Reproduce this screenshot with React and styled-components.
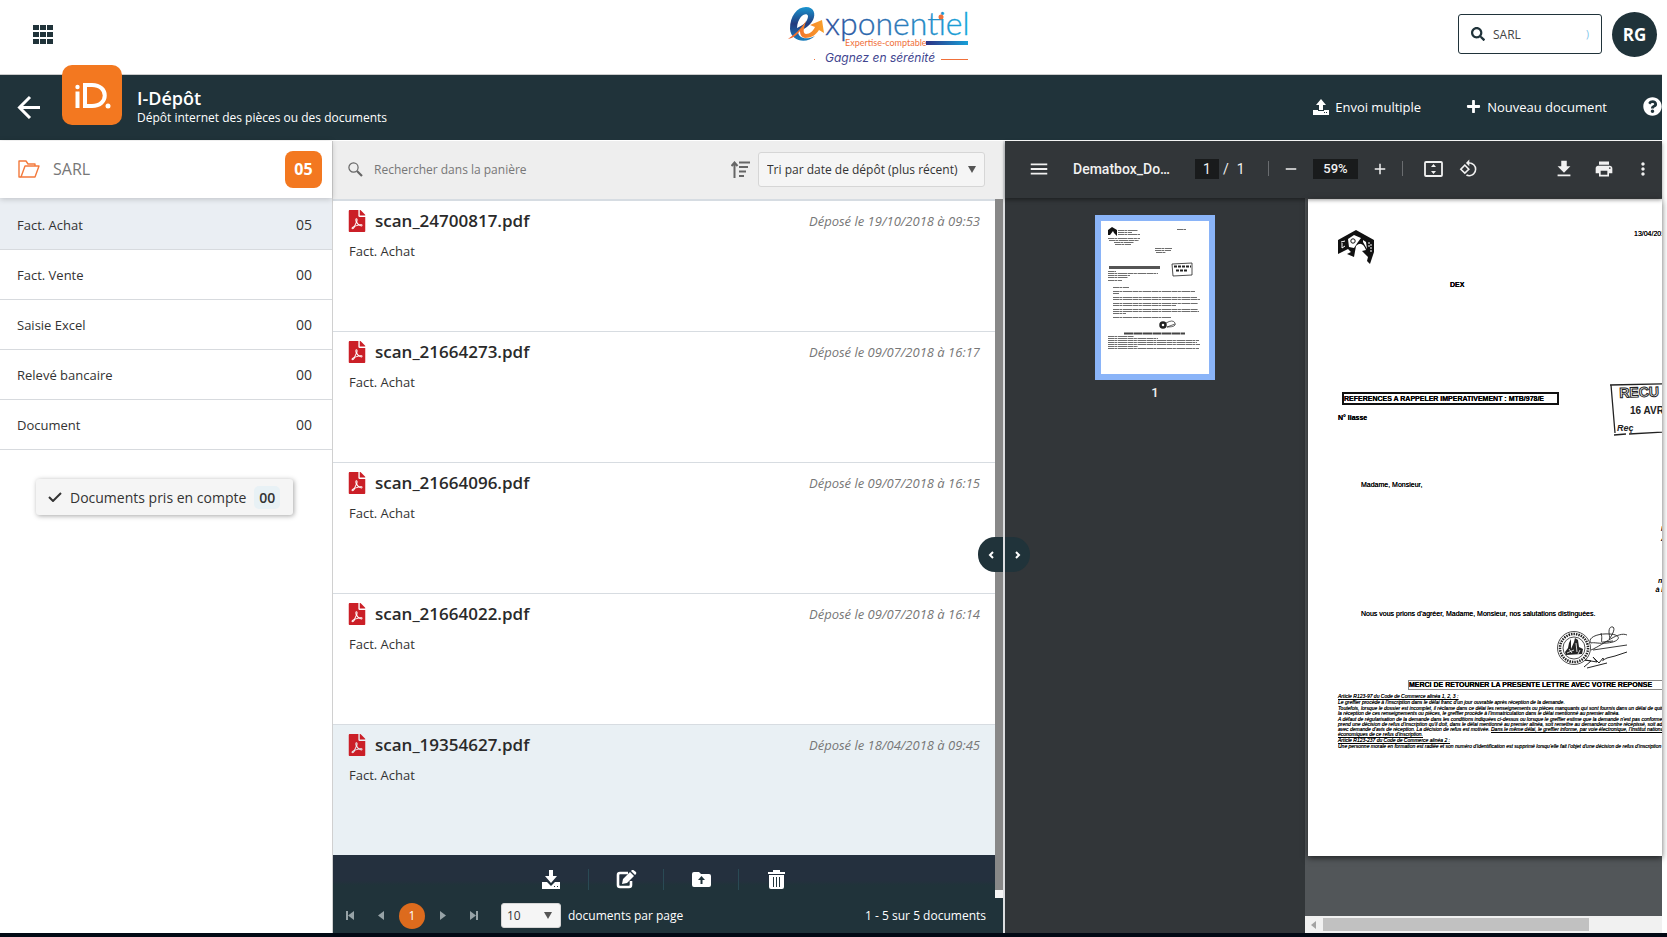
import styled, { createGlobalStyle } from 'styled-components';
import { FaFilePdf, FaPlus, FaQuestionCircle, FaSearch } from 'react-icons/fa';
import {
  MdAdd,
  MdMenu,
  MdMoreVert,
  MdPrint,
  MdRemove,
  MdRotate90DegreesCcw,
} from 'react-icons/md';

const folders = [
  { name: 'Fact. Achat', count: '05', active: true },
  { name: 'Fact. Vente', count: '00' },
  { name: 'Saisie Excel', count: '00' },
  { name: 'Relevé bancaire', count: '00' },
  { name: 'Document', count: '00' },
];

const documents = [
  { name: 'scan_24700817.pdf', date: '19/10/2018 à 09:53' },
  { name: 'scan_21664273.pdf', date: '09/07/2018 à 16:17' },
  { name: 'scan_21664096.pdf', date: '09/07/2018 à 16:15' },
  { name: 'scan_21664022.pdf', date: '09/07/2018 à 16:14' },
  { name: 'scan_19354627.pdf', date: '18/04/2018 à 09:45', selected: true },
];

// [y, x, width] of each text line in the page preview
const thumbLines = [
  [9, 17, 20], [11, 17, 14], [13, 17, 22],
  [17, 7, 32], [19, 8, 30], [21, 13, 20], [23, 14, 16],
  [8, 76, 9], [27, 54, 17], [29, 54, 16], [31, 55, 10],
  [50, 7, 8], [52, 7, 50], [54, 7, 22], [56, 7, 20], [59, 7, 14],
  [66, 12, 16], [70, 12, 82], [72, 12, 6], [76, 12, 84], [78, 12, 87],
  [82, 12, 85], [84, 12, 63], [88, 12, 85], [90, 12, 86], [92, 12, 13],
  [96, 12, 58], [115, 7, 26], [117, 7, 50], [119, 7, 91], [121, 7, 89],
  [123, 7, 92], [125, 7, 30], [127, 7, 91],
];

const GlobalStyle = createGlobalStyle`
  * {
    box-sizing: border-box;
  }

  body {
    margin: 0;
    background: #fff;
    font-family: 'Open Sans', 'Noto Sans', sans-serif;
    font-size: 13px;
    color: #333;
  }

  button, input, select {
    margin: 0;
    padding: 0;
    border: 0;
    background: none;
    font: inherit;
    color: inherit;
  }

  button {
    cursor: pointer;
  }

  h1, h2, p, ul {
    margin: 0;
    padding: 0;
    font-weight: normal;
  }

  svg {
    display: block;
    flex-shrink: 0;
  }
`;

const GridIcon = () => (
  <svg width="20" height="19" viewBox="0 0 20 19" fill="#20333a">
    {[0, 7, 14].map((y) =>
      [0, 7, 14].map((x) => (
        <rect key={`${x}-${y}`} x={x} y={y} width="6" height="5" />
      ))
    )}
  </svg>
);

const BrandLogo = () => (
  <svg width="180" height="60" viewBox="0 0 180 60" overflow="visible" role="img" aria-label="Exponentiel">
    <defs>
      <linearGradient id="word" x1="0" x2="1">
        <stop offset="0" stopColor="#2b4f9c" />
        <stop offset="0.5" stopColor="#2c79b8" />
        <stop offset="1" stopColor="#18a5dc" />
      </linearGradient>
      <linearGradient id="bar" x1="0" x2="1">
        <stop offset="0" stopColor="#2d3284" />
        <stop offset="1" stopColor="#17a0d8" />
      </linearGradient>
      <linearGradient id="swirl" x1="0" x2="0" y1="0" y2="1">
        <stop offset="0" stopColor="#1a95d0" />
        <stop offset="0.5" stopColor="#223a7e" />
        <stop offset="1" stopColor="#1b7fbd" />
      </linearGradient>
      <linearGradient id="arrow" x1="0" x2="1">
        <stop offset="0" stopColor="#f0622c" />
        <stop offset="1" stopColor="#f9a02b" />
      </linearGradient>
    </defs>
    <path
      d="M2 25C2 12 9 3 18 3C26 3 28 10 25 16C21 23 15 26 10 27C10 35 19 36 27 32C19 40 3 38 2 25ZM9 24C16 21 20 17 20 12C19 8 10 11 9 24Z"
      fill="url(#swirl)"
      fillRule="evenodd"
    />
    <path
      d="M0 35C7 30 13 25 18 17C16 24 14 29 18 30C22 30 25 27 27 23L22 21L34 16L36 29L31 26C28 31 23 34 17 34C13 33 12 30 12 27C9 31 5 34 0 35Z"
      fill="url(#arrow)"
    />
    <text x="37" y="31" fontFamily="Lato, sans-serif" fontSize="32" fontWeight="300" stroke="url(#word)" strokeWidth="0.300" fill="url(#word)">
      xponentiel
    </text>
    <circle cx="153" cy="13" r="2.500" fill="#f0703a" />
    <text x="57" y="42" fontFamily="Lato, sans-serif" fontSize="9" fill="#f0703a">
      Expertise-comptable
    </text>
    <rect x="138" y="37" width="42" height="4" fill="url(#bar)" />
    <rect x="26" y="55" width="1" height="1" fill="#f0703a" />
    <text x="37" y="58" fontFamily="Inter, sans-serif" fontStyle="italic" fontSize="12" fill="#41458f">
      Gagnez en sérénité
    </text>
    <rect x="153" y="55" width="27" height="1" fill="#f0703a" />
  </svg>
);

const BackIcon = () => (
  <svg width="24" height="24" viewBox="0 0 24 24" fill="none" stroke="#fff" strokeWidth="3">
    <path d="M13 2L2.500 12.500L13 23M2.500 12.500H23" />
  </svg>
);

const UploadIcon = () => (
  <svg width="16" height="16" viewBox="0 0 16 16" fill="#fff">
    <path d="M8 0L13 6H10V11H6V6H3Z" />
    <path d="M0 11H5V12H11V11H16V16H0ZM11 13V14H12V13ZM13 13V14H14V13Z" fillRule="evenodd" />
  </svg>
);

const FolderOpenIcon = () => (
  <svg width="22" height="18" viewBox="0 0 22 18" fill="none" stroke="#f37a3c" strokeWidth="1.4" strokeLinejoin="round">
    <path d="M3 17H1V1H8L10 4H17V6" />
    <path d="M3 17L7 6H21L17 17Z" />
  </svg>
);

const CheckIcon = () => (
  <svg width="14" height="10" viewBox="0 0 14 10" fill="none" stroke="#333" strokeWidth="2">
    <path d="M1 5L5 9L13 1" />
  </svg>
);

const MagnifierIcon = () => (
  <svg width="15" height="15" viewBox="0 0 15 15" fill="none" stroke="#666">
    <circle cx="5.500" cy="5.500" r="4.600" strokeWidth="1.200" />
    <path d="M9 9L14 14" strokeWidth="2.200" />
  </svg>
);

const SortIcon = () => (
  <svg width="19" height="17" viewBox="0 0 19 17" fill="none" stroke="#666" strokeWidth="2">
    <path d="M3.500 17V2M0.500 5L3.500 1.500L6.500 5" />
    <path d="M8 1.500H19M8 6H17M8 10.500H15M8 15H13" />
  </svg>
);

const DownloadTrayIcon = () => (
  <svg width="18" height="19" viewBox="0 0 18 19" fill="#fff">
    <path d="M7 0H11V6H15L9 13L3 6H7Z" />
    <path d="M0 12H5L9 16L13 12H18V19H0ZM12 16V17H13V16ZM15 16V17H16V16Z" fillRule="evenodd" />
  </svg>
);

const EditIcon = () => (
  <svg width="21" height="19" viewBox="0 0 21 19">
    <path d="M12 3H4Q2 3 2 5V15Q2 17 4 17H13Q15 17 15 15V11" fill="none" stroke="#fff" strokeWidth="2.600" />
    <path d="M6 14L7 9L14 2L18 6L11 13ZM15 1L16 0Q17 -0.500 18 0.500L20 2Q20.500 3 20 4L19 5Z" fill="#fff" />
  </svg>
);

const FolderUpIcon = () => (
  <svg width="19" height="15" viewBox="0 0 19 15">
    <path d="M0 2Q0 0 2 0H7L9 2H17Q19 2 19 4V13Q19 15 17 15H2Q0 15 0 13Z" fill="#fff" />
    <path d="M9.500 4L13 8H10.500V12H8.500V8H6Z" fill="#20333a" />
  </svg>
);

const TrashIcon = () => (
  <svg width="17" height="19" viewBox="0 0 17 19">
    <path d="M5 2V0H12V2H17V4H0V2ZM1 5H16V17Q16 19 14 19H3Q1 19 1 17Z" fill="#fff" />
    <path d="M5.500 7V17M8.500 7V17M11.500 7V17" stroke="#20333a" />
  </svg>
);

const PagerIcon = ({ bar, flip }) => (
  <svg width="9" height="9" viewBox="0 0 9 9" fill="#97a3a7" transform={flip ? 'rotate(180)' : undefined}>
    <path d="M8 0V9L2 4.500Z" />
    {bar && <rect width="2" height="9" />}
  </svg>
);

const CaretDown = () => (
  <svg width="8" height="7" viewBox="0 0 8 7" fill="#555">
    <path d="M0 0H8L4 7Z" />
  </svg>
);

const FitPageIcon = () => (
  <svg width="19" height="16" viewBox="0 0 19 16" fill="none" stroke="#f1f1f1">
    <rect x="1" y="1" width="17" height="14" rx="1" strokeWidth="1.800" />
    <path d="M9.500 3L12 6H7ZM9.500 13L12 10H7Z" fill="#f1f1f1" stroke="none" />
  </svg>
);

const DownloadIcon = () => (
  <svg width="22" height="22" viewBox="0 0 24 24" fill="#f1f1f1">
    <path d="M19 9h-4V3H9v6H5l7 7 7-7zM5 18v2h14v-2H5z" />
  </svg>
);

const ChevronIcon = ({ right }) => (
  <svg width="6" height="8" viewBox="0 0 6 8" fill="none" stroke="#fff" strokeWidth="2">
    <path d={right ? 'M1 1L4 4L1 7' : 'M5 1L2 4L5 7'} />
  </svg>
);

const ThumbDrawing = () => (
  <svg width="108" height="153" viewBox="0 0 108 153">
    <path d="M7 14V9L11 6L16 9V15L13 12L12 10L9 14Z" fill="#111" />
    <g stroke="#222" strokeDasharray="6 0.400 3 0.600 9 0.500" opacity="0.650">
      {thumbLines.map(([y, x, w]) => (
        <path key={`${y}-${x}`} d={`M${x} ${y + 0.5}h${w}`} />
      ))}
    </g>
    <rect x="8" y="45" width="51" height="3" fill="#555" />
    <g fill="none" stroke="#222">
      <path d="M71 43L91 42V54L72 55Z" strokeWidth="0.800" />
      <path d="M73 45.500h17M75 49.500h12" strokeWidth="2" strokeDasharray="3 1" />
      <circle cx="62" cy="104" r="2.500" strokeWidth="2.500" />
      <path d="M65 102Q72 98 74 102T66 106L74 103" strokeWidth="0.700" />
    </g>
    <path d="M23 112.500h61" stroke="#444" strokeWidth="2" strokeDasharray="9 0.500" />
  </svg>
);

const LetterEmblem = () => (
  <svg width="37" height="34" viewBox="0 0 37 34">
    <path d="M0 10L18 0L36 10V22L32 34L29 31L30 27L24 21L28 20Q24 10 18 16L16 27L9 24L13 22L10 19L6 21L0 24Z" fill="#111" />
    <path d="M10 9L16 5L23 8L20 12L16 18L11 17ZM25 10L28 12L29 19L25 12Z" fill="#fff" />
    <path d="M3 12L7 11M4 13V18L7 16" stroke="#fff" fill="none" />
    <circle cx="15" cy="11" r="2.200" fill="none" stroke="#111" />
    <path d="M31 12V18M33 14V23" stroke="#fff" strokeDasharray="2 1" />
  </svg>
);

const Stamp = () => (
  <svg width="90" height="54" viewBox="0 0 90 54">
    <path d="M0 2L88 0M1 2L5 50M4 52L16 51M19 51L88 47" stroke="#222" fill="none" strokeWidth="1.300" />
    <g fontFamily="'Liberation Sans', sans-serif" fontWeight="bold" fill="#222">
      <text x="9" y="15" fontSize="14" fill="#fff" stroke="#222" transform="rotate(-2)">RECU LE</text>
      <text x="20" y="31" fontSize="10">16 AVR. 2018</text>
      <text x="7" y="48" fontSize="9" fontStyle="italic">Reç</text>
    </g>
  </svg>
);

const SealAndSignature = () => (
  <svg width="72" height="44" viewBox="0 0 72 44" fill="none" stroke="#222">
    <circle cx="17" cy="23" r="16.500" strokeWidth="0.800" />
    <circle cx="17" cy="23" r="14" strokeWidth="2.500" strokeDasharray="1.500 1" />
    <circle cx="17" cy="23" r="11" strokeWidth="0.800" />
    <path d="M8 27L11 23L12 18L14 14V24L17 17L18 13L21 15L22 22L26 24L25 29L9 30Z" fill="#222" stroke="none" />
    <path d="M12 24L15 28M19 18L20 27M23 25L21 29M10 28L17 25" stroke="#fff" strokeWidth="0.800" />
    <path d="M34 18C30 13 40 8 53 9C66 10 63 17 50 18C42 19 37 17 34 18ZM44 8C46 14 43 18 46 17L56 16M53 13C51 6 52 1 56 2C59 4 54 12 52 14M34 25C48 19 61 6 70 10M36 25L70 20" strokeWidth="0.900" />
    <path d="M27 42L34 36L28 35L40 37L36 32L42 38L46 33C48 36 42 37 50 33L54 32L58 31L70 27M30 43L50 38" strokeWidth="1" />
  </svg>
);

const App = () => (
  <Page>
    <GlobalStyle />
    <TopBar>
      <IconButton aria-label="Applications">
        <GridIcon />
      </IconButton>
      <BrandLogo />
      <TopRight>
        <CompanySearch>
          <FaSearch size={14} color="#20333a" />
          <input aria-label="Société" defaultValue="SARL" />
          <span aria-hidden="true">)</span>
        </CompanySearch>
        <Avatar aria-label="Mon compte">RG</Avatar>
      </TopRight>
    </TopBar>

    <AppHeader>
      <IconButton aria-label="Retour">
        <BackIcon />
      </IconButton>
      <AppBadge aria-hidden="true">
        <svg width="60" height="60" viewBox="0 0 60 60" fill="none" stroke="#fff">
          <circle cx="15.500" cy="22" r="2.200" fill="#fff" stroke="none" />
          <path d="M15.500 26.500V43" strokeWidth="4" />
          <path d="M23 20H30C47 20 47 41 30 41H23Z" strokeWidth="4" />
          <circle cx="46" cy="41" r="2.500" fill="#fff" stroke="none" />
        </svg>
      </AppBadge>
      <AppTitle>
        <h1>I-Dépôt</h1>
        <p>Dépôt internet des pièces ou des documents</p>
      </AppTitle>
      <HeaderActions>
        <HeaderButton>
          <UploadIcon />
          Envoi multiple
        </HeaderButton>
        <HeaderButton>
          <FaPlus size={15} />
          Nouveau document
        </HeaderButton>
        <IconButton aria-label="Aide">
          <FaQuestionCircle size={19} color="#fff" />
        </IconButton>
      </HeaderActions>
    </AppHeader>

    <Workspace>
      <Sidebar>
        <SidebarHead>
          <FolderOpenIcon />
          <h2>SARL</h2>
          <TotalBadge>05</TotalBadge>
        </SidebarHead>
        <FolderList>
          {folders.map(({ name, count, active }) => (
            <FolderItem key={name} $active={active}>
              <a href="#folder">
                {name}
                <span>{count}</span>
              </a>
            </FolderItem>
          ))}
        </FolderList>
        <ProcessedButton>
          <CheckIcon />
          Documents pris en compte
          <b>00</b>
        </ProcessedButton>
      </Sidebar>

      <Listing>
        <ListHead>
          <MagnifierIcon />
          <input aria-label="Rechercher" placeholder="Rechercher dans la panière" />
          <SortIcon />
          <SelectBox $height={35} $width={227}>
            <select aria-label="Trier">
              <option>Tri par date de dépôt (plus récent)</option>
            </select>
            <CaretDown />
          </SelectBox>
        </ListHead>
        <ListBody>
          <ListColumn>
            <DocumentList>
              {documents.map(({ name, date, selected }) => (
                <DocumentRow key={name} $selected={selected}>
                  <FaFilePdf size={22} color="#cb1f27" />
                  <h2>{name}</h2>
                  <time>Déposé le {date}</time>
                  <p>Fact. Achat</p>
                </DocumentRow>
              ))}
            </DocumentList>
            <ActionBar>
              <button aria-label="Télécharger"><DownloadTrayIcon /></button>
              <button aria-label="Modifier"><EditIcon /></button>
              <button aria-label="Déplacer"><FolderUpIcon /></button>
              <button aria-label="Supprimer"><TrashIcon /></button>
            </ActionBar>
          </ListColumn>
          <ListScrollbar />
        </ListBody>
        <Pager>
          <button aria-label="Première page"><PagerIcon bar /></button>
          <button aria-label="Page précédente"><PagerIcon /></button>
          <CurrentPage>1</CurrentPage>
          <button aria-label="Page suivante"><PagerIcon flip /></button>
          <button aria-label="Dernière page"><PagerIcon bar flip /></button>
          <SelectBox $height={25} $width={60} $tight>
            <select id="page-size">
              <option>10</option>
            </select>
            <CaretDown />
          </SelectBox>
          <label htmlFor="page-size">documents par page</label>
          <PagerInfo>1 - 5 sur 5 documents</PagerInfo>
        </Pager>
        <SplitToggle>
          <button aria-label="Réduire la liste"><ChevronIcon /></button>
          <button aria-label="Agrandir la liste"><ChevronIcon right /></button>
        </SplitToggle>
      </Listing>

      <Viewer>
        <ViewerBar>
          <IconButton aria-label="Menu"><MdMenu size={22} /></IconButton>
          <ViewerTitle>Dematbox_Do…</ViewerTitle>
          <PageNumber>
            <input aria-label="Page" defaultValue="1" />
            <span>/</span>
            <span>1</span>
          </PageNumber>
          <Divider />
          <ZoomGroup>
            <IconButton aria-label="Zoom arrière"><MdRemove size={18} /></IconButton>
            <input aria-label="Zoom" defaultValue="59%" />
            <IconButton aria-label="Zoom avant"><MdAdd size={18} /></IconButton>
          </ZoomGroup>
          <Divider />
          <ViewTools>
            <IconButton aria-label="Ajuster à la page"><FitPageIcon /></IconButton>
            <IconButton aria-label="Pivoter"><MdRotate90DegreesCcw size={19} /></IconButton>
          </ViewTools>
          <FileTools>
            <IconButton aria-label="Télécharger"><DownloadIcon /></IconButton>
            <IconButton aria-label="Imprimer"><MdPrint size={20} /></IconButton>
            <IconButton aria-label="Plus"><MdMoreVert size={20} /></IconButton>
          </FileTools>
        </ViewerBar>
        <ViewerBody>
          <Thumbnails>
            <Thumbnail aria-label="Page 1">
              <ThumbDrawing />
            </Thumbnail>
            <span>1</span>
          </Thumbnails>
          <Canvas>
            <Letter>
              <LetterHead>
                <LetterEmblem />
                <span>13/04/2018</span>
              </LetterHead>
              <LetterCity>DEX</LetterCity>
              <LetterReference>
                <div>
                  <strong>REFERENCES A RAPPELER IMPERATIVEMENT : MTB/978/E</strong>
                  <p>N° liasse</p>
                </div>
                <Stamp />
              </LetterReference>
              <LetterText>Madame, Monsieur,</LetterText>
              <LetterRemains>
                <span>N</span>
                <span>A</span>
                <span>d</span>
                <span>ne</span>
                <span>à E</span>
              </LetterRemains>
              <LetterText>
                Nous vous prions d'agréer, Madame, Monsieur, nos salutations distinguées.
              </LetterText>
              <LetterSeal>
                <SealAndSignature />
              </LetterSeal>
              <LetterNotice>MERCI DE RETOURNER LA PRESENTE LETTRE AVEC VOTRE REPONSE</LetterNotice>
              <FinePrint>
                <p><u>Article R123-97 du Code de Commerce alinéa 1, 2, 3 :</u></p>
                <p>Le greffier procède à l'inscription dans le délai franc d'un jour ouvrable après réception de la demande.</p>
                <p>
                  Toutefois, lorsque le dossier est incomplet, il réclame dans ce délai les renseignements ou pièces manquants qui sont fournis dans un délai de quinze jours à compter de<br />
                  la réception de ces renseignements ou pièces, le greffier procède à l'immatriculation dans le délai mentionné au premier alinéa.
                </p>
                <p>
                  A défaut de régularisation de la demande dans les conditions indiquées ci-dessus ou lorsque le greffier estime que la demande n'est pas conforme aux dispositions<br />
                  prend une décision de refus d'inscription qu'il doit, dans le délai mentionné au premier alinéa, soit remettre au demandeur contre récépissé, soit adresser à celui-ci<br />
                  avec demande d'avis de réception. La décision de refus est motivée. <u>Dans le même délai, le greffier informe, par voie électronique, l'Institut national de la</u><br />
                  <u>économiques de ce refus d'inscription.</u>
                </p>
                <p><u>Article R123-237 du Code de Commerce alinéa 2 :</u></p>
                <p>Une personne morale en formation est radiée et son numéro d'identification est supprimé lorsqu'elle fait l'objet d'une décision de refus d'inscription au registre du</p>
              </FinePrint>
            </Letter>
            <HorizontalScrollbar>
              <svg width="5" height="8" viewBox="0 0 5 8" fill="#a3a3a3">
                <path d="M5 0V8L0 4Z" />
              </svg>
              <div />
            </HorizontalScrollbar>
          </Canvas>
        </ViewerBody>
      </Viewer>
    </Workspace>
  </Page>
);

const Page = styled.div`
  display: flex;
  flex-direction: column;

  height: 100vh;
  padding-right: 5px;
  border-bottom: 4px solid #020914;
  overflow: hidden;
`;

const IconButton = styled.button`
  display: flex;
  align-items: center;
  justify-content: center;
`;

const TopBar = styled.header`
  display: grid;
  grid-template-columns: 755fr 180px 689fr;
  align-items: center;

  height: 75px;
  flex-shrink: 0;
  padding: 0 5px 6px 33px;
  border-bottom: 1px solid #ccc;

  > button {
    justify-self: start;
  }
`;

const TopRight = styled.div`
  display: flex;
  align-items: center;
  justify-content: flex-end;
  gap: 10px;
`;

const CompanySearch = styled.label`
  display: flex;
  align-items: center;
  gap: 8px;

  width: 144px;
  height: 40px;
  padding: 0 12px;
  border: 1px solid #20333a;
  border-radius: 3px;

  input {
    flex: 1;
    min-width: 0;
    font-size: 12px;
    color: #444;
  }

  span {
    font-size: 10px;
    color: #7cc4ea;
  }
`;

const Avatar = styled.button`
  width: 45px;
  height: 45px;
  border-radius: 50%;

  background: #20333a;
  color: #fff;
  font-size: 17px;
  font-weight: 700;
`;

const AppHeader = styled.div`
  display: flex;
  align-items: center;

  height: 65px;
  flex-shrink: 0;
  padding: 0 0 2px 17px;

  background: #20333a;
  color: #fff;
`;

const AppBadge = styled.div`
  align-self: flex-start;

  width: 60px;
  height: 60px;
  margin: -10px 15px 0 21px;
  border-radius: 10px;
  background: #f37820;
  z-index: 1;
`;

const AppTitle = styled.div`
  padding-bottom: 2px;

  h1 {
    font-size: 18px;
    line-height: 24px;
    font-weight: 600;
  }

  p {
    font-size: 12px;
    line-height: 16px;
  }
`;

const HeaderActions = styled.div`
  display: flex;
  align-items: center;
  margin-left: auto;
`;

const HeaderButton = styled.button`
  display: flex;
  align-items: center;
  gap: 6px;
  margin-right: 45px;

  & + & {
    margin-right: 36px;
  }
`;

const Workspace = styled.main`
  display: grid;
  grid-template-columns: 333px minmax(0, 672fr) minmax(0, 657fr);
  flex: 1;
  min-height: 0;
  padding-top: 1px;
`;

const Sidebar = styled.aside`
  display: flex;
  flex-direction: column;
  border-right: 1px solid #d0d0d0;
`;

const SidebarHead = styled.div`
  display: flex;
  align-items: center;
  gap: 13px;

  height: 57px;
  padding: 0 10px 1px 18px;
  box-shadow: 0 1px 6px rgba(0, 0, 0, 0.2);
  z-index: 1;

  h2 {
    flex: 1;
    font-size: 16px;
    color: #777;
  }
`;

const TotalBadge = styled.span`
  width: 37px;
  border-radius: 8px;

  background: #f37820;
  color: #fff;
  font-size: 16px;
  font-weight: 700;
  line-height: 37px;
  text-align: center;
`;

const FolderList = styled.ul`
  list-style: none;
`;

const FolderItem = styled.li`
  border-bottom: 1px solid #d7dade;
  background: ${({ $active }) => ($active ? '#eaeef3' : '#fff')};

  a {
    display: flex;
    align-items: center;
    justify-content: space-between;

    height: 49px;
    padding: 0 20px 0 17px;
    color: #333;
    text-decoration: none;
  }

  &:first-child a {
    height: 51px;
    padding-top: 2px;
  }

  span {
    font-size: 14px;
  }
`;

const ProcessedButton = styled.button`
  display: flex;
  align-items: center;
  gap: 8px;

  height: 36px;
  margin: 29px 39px 0 36px;
  padding: 0 12px;
  border-radius: 3px;

  background: #f5f5f5;
  box-shadow: 1px 1px 5px rgba(0, 0, 0, 0.35);
  font-size: 14px;
  white-space: nowrap;

  b {
    padding: 2px 5px;
    border-radius: 5px;
    background: #e8f1f5;
    font-weight: 600;
  }
`;

const Listing = styled.section`
  display: flex;
  flex-direction: column;
  position: relative;
  border-right: 2px solid #dcdee0;
`;

const ListHead = styled.div`
  display: flex;
  align-items: center;
  gap: 8px;

  height: 60px;
  flex-shrink: 0;
  padding: 0 18px 1px 15px;
  border-bottom: 2px solid #d6dce2;
  background: #eee;

  input {
    flex: 1;
    padding-left: 3px;
    font-size: 12px;

    &::placeholder {
      color: #777;
      opacity: 1;
    }
  }
`;

const SelectBox = styled.div`
  display: grid;
  align-items: center;

  width: ${({ $width }) => $width}px;
  height: ${({ $height }) => $height}px;
  border: 1px solid #d6d6d6;
  border-radius: 3px;
  background: #f5f5f5;
  color: #333;
  font-size: 12px;

  select {
    appearance: none;
    grid-area: 1 / 1;
    width: 100%;
    height: 100%;
    padding: 0 ${({ $tight }) => ($tight ? 5 : 8)}px;
  }

  svg {
    grid-area: 1 / 1;
    justify-self: end;
    margin-right: 8px;
    pointer-events: none;
  }
`;

const ListBody = styled.div`
  display: flex;
  flex: 1;
  min-height: 0;
`;

const ListColumn = styled.div`
  display: flex;
  flex-direction: column;
  flex: 1;
`;

const DocumentList = styled.div`
  display: flex;
  flex-direction: column;
  flex: 1;
`;

const DocumentRow = styled.article`
  display: grid;
  grid-template-columns: 17px 1fr auto;
  grid-template-rows: 24px 16px;
  gap: 10px;
  align-items: center;

  flex: 1;
  padding: 8px 15px;
  border-top: 1px solid #d7dce1;
  background: ${({ $selected }) => ($selected ? '#e9f0f4' : '#fff')};

  &:first-child {
    border-top: 0;
  }

  svg {
    justify-self: center;
  }

  h2 {
    font-size: 17px;
    line-height: 24px;
    font-weight: 600;
    color: #2a2a2a;
  }

  time {
    font-style: italic;
    color: #777;
  }

  p {
    grid-column: 1 / -1;
    padding-left: 1px;
  }
`;

const ActionBar = styled.div`
  display: flex;
  align-items: center;
  justify-content: center;

  height: 43px;
  padding: 6px 2px 0 0;
  background: linear-gradient(#24303e 60%, #20333a 70%);

  button {
    display: flex;
    align-items: center;
    justify-content: center;
    width: 75px;
    height: 21px;
  }

  button + button {
    border-left: 1px solid #2a4a55;
  }
`;

const ListScrollbar = styled.div`
  width: 8px;
  margin-top: -2px;
  border-bottom: 8px solid #f5f5f5;
  background: #888;
`;

const Pager = styled.div`
  display: flex;
  align-items: center;

  height: 35px;
  padding: 0 17px 0 3px;
  background: #20333a;
  color: #fff;
  font-size: 12px;

  > button {
    display: flex;
    justify-content: center;
    width: 28px;
    margin-right: 2px;
  }

  > div {
    margin: 0 7px 0 12px;
  }
`;

const CurrentPage = styled.span`
  width: 26px;
  margin: 0 4px 0 3px;
  border-radius: 50%;
  background: #dd6b1d;
  line-height: 26px;
  text-align: center;
`;

const PagerInfo = styled.span`
  margin-left: auto;
`;

const SplitToggle = styled.div`
  display: flex;
  gap: 2px;
  position: absolute;
  top: 50%;
  right: -27px;
  z-index: 2;

  button {
    display: flex;
    align-items: center;
    justify-content: center;
    width: 25px;
    height: 35px;
    border-radius: 17px 0 0 17px;
    background: #20333a;
  }

  button + button {
    border-radius: 0 17px 17px 0;
  }
`;

const Viewer = styled.section`
  display: flex;
  flex-direction: column;
  background: #323639;
  color: #f1f1f1;
  font-family: Roboto, sans-serif;
  font-size: 14px;
`;

const ViewerBar = styled.div`
  display: flex;
  align-items: center;

  height: 57px;
  padding: 0 9px 2px 23px;
  box-shadow: 0 2px 4px rgba(0, 0, 0, 0.4);
  z-index: 1;

  input {
    height: 20px;
    background: #191b1c;
    text-align: center;
  }
`;

const ViewerTitle = styled.span`
  width: 122px;
  margin-left: 23px;
  font-weight: 500;
  white-space: nowrap;
`;

const PageNumber = styled.div`
  display: flex;
  align-items: center;
  gap: 8px;
  width: 73px;

  input {
    width: 24px;
    margin-right: -4px;
  }
`;

const Divider = styled.i`
  width: 1px;
  height: 15px;
  background: #6a6d70;
`;

const ZoomGroup = styled.div`
  display: flex;
  align-items: center;
  gap: 13px;
  padding: 0 13px;

  input {
    width: 45px;
    font-size: 13px;
    font-weight: 500;
  }
`;

const ViewTools = styled.div`
  display: flex;
  gap: 16px;
  margin-left: 21px;
`;

const FileTools = styled.div`
  display: flex;
  gap: 19px;
  margin-left: auto;
`;

const ViewerBody = styled.div`
  display: flex;
  flex: 1;
  min-height: 0;
`;

const Thumbnails = styled.div`
  display: flex;
  flex-direction: column;
  align-items: center;
  gap: 5px;

  width: 300px;
  padding-top: 17px;
  font-size: 13px;
  font-weight: 500;
`;

const Thumbnail = styled.button`
  border: 6px solid #8ab4f8;
  background: #fff;
`;

const Canvas = styled.div`
  display: flex;
  flex-direction: column;
  justify-content: space-between;
  flex: 1;
  min-width: 0;
  background: #525659;
`;

const Letter = styled.article`
  height: 657px;
  margin: 1px 0 0 3px;
  padding: 31px 0 0 30px;
  overflow: hidden;

  background: #fff;
  box-shadow: 0 2px 6px rgba(0, 0, 0, 0.6);
  color: #000;
  font-family: 'Liberation Sans', Arial, sans-serif;
  font-size: 7px;
  line-height: 8px;
  text-shadow: 0 0 0 #000;
  white-space: nowrap;

  svg {
    text-shadow: none;
  }
`;

const LetterHead = styled.div`
  display: flex;
  gap: 259px;
`;

const LetterCity = styled.p`
  margin: 17px 0 0 112px;
  font-weight: 700;
`;

const LetterReference = styled.div`
  display: flex;
  gap: 51px;
  margin-top: 94px;

  > div {
    padding: 9px 0 0 4px;
  }

  strong {
    display: block;
    width: 217px;
    border: 2px solid #111;
    line-height: 9px;
  }

  p {
    margin: 9px 0 0 -4px;
    font-weight: 700;
  }
`;

const LetterText = styled.p`
  margin: 44px 0 0 23px;
`;

const LetterRemains = styled.div`
  display: grid;
  grid-template-rows: 10px 17px 25px 9px 8px;
  justify-items: end;
  margin: 36px -4px -28px 0;
  font-style: italic;
`;

const LetterSeal = styled.div`
  margin: 7px 0 0 219px;
`;

const LetterNotice = styled.p`
  width: 360px;
  margin: 11px 0 0 70px;
  border: 1px solid #888;
  font-weight: 700;
`;

const FinePrint = styled.div`
  display: flex;
  flex-direction: column;
  gap: 1px;
  margin-top: 4px;

  font-size: 5px;
  font-style: italic;
  line-height: 5px;
`;

const HorizontalScrollbar = styled.div`
  display: flex;
  align-items: center;
  gap: 7px;

  height: 17px;
  padding: 0 6px;
  background: #f1f1f1;

  div {
    width: 77%;
    height: 13px;
    background: #c1c1c1;
  }
`;

export default App;
